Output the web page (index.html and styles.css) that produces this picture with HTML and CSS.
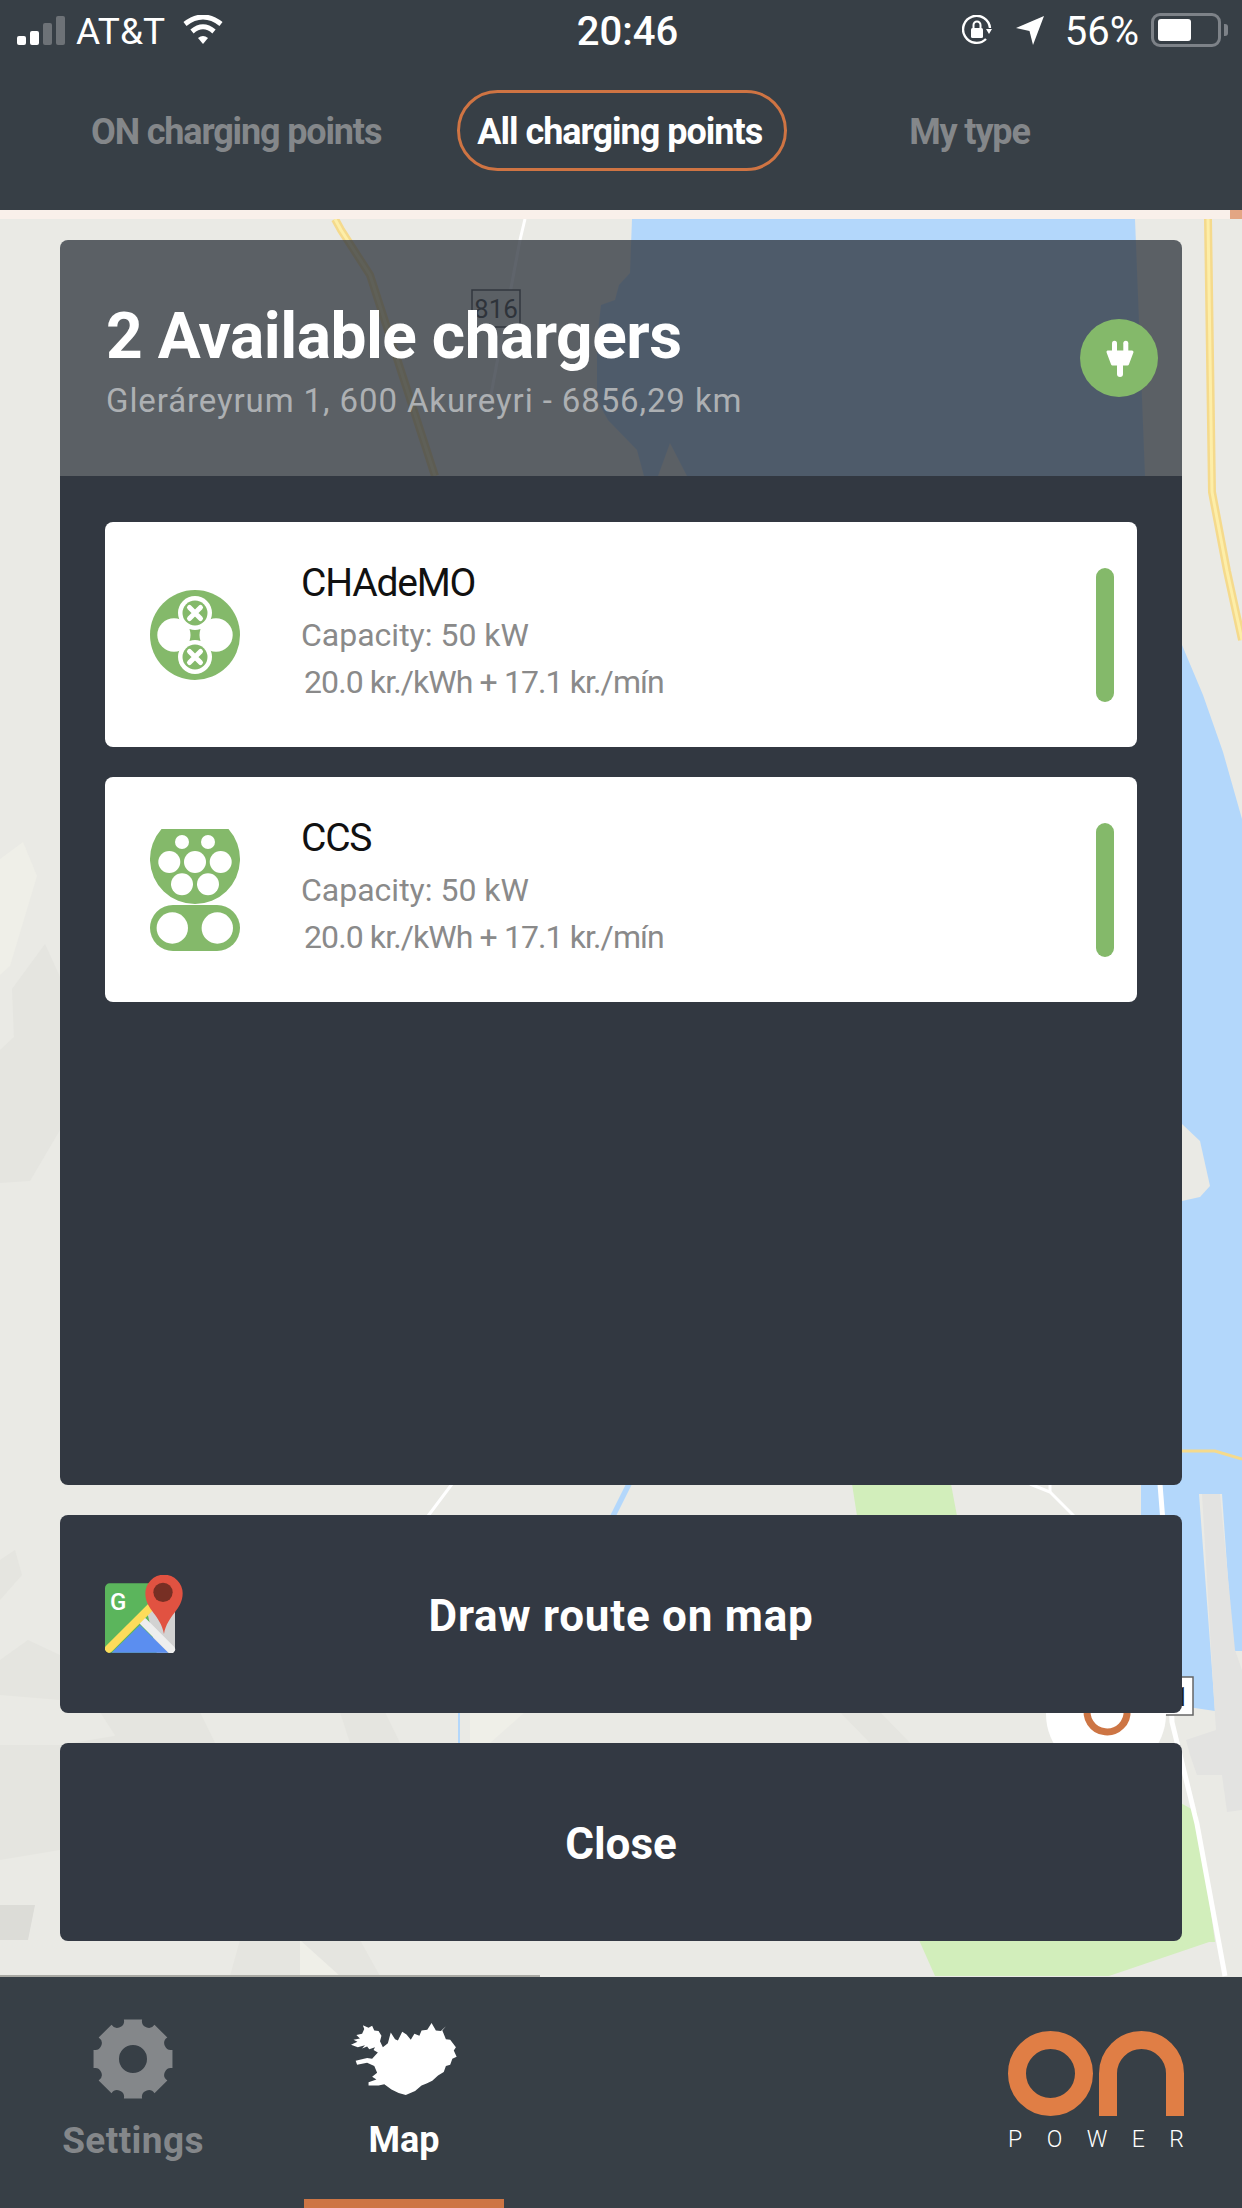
FILE: index.html
```html
<!DOCTYPE html>
<html lang="en">
<head>
    <meta charset="UTF-8">
    <meta name="viewport" content="width=device-width, initial-scale=1.0">
    <title>ON Power - Map</title>
    <link rel="stylesheet" href="styles.css">
</head>
<body>
    <header class="top-bar">
        <div class="status-bar">
            <div class="status-left">
                <div class="signal">
                    <span class="bar bar-1"></span>
                    <span class="bar bar-2"></span>
                    <span class="bar bar-3 off"></span>
                    <span class="bar bar-4 off"></span>
                </div>
                <span class="carrier">AT&amp;T</span>
                <svg class="wifi" viewBox="0 0 40 30" width="40" height="30">
                    <path d="M20 29 L15 23 Q20 19 25 23 Z" fill="#fff"/>
                    <path d="M9 16.5 Q20 7 31 16.5" fill="none" stroke="#fff" stroke-width="5"/>
                    <path d="M2 9 Q20 -5 38 9" fill="none" stroke="#fff" stroke-width="5"/>
                </svg>
            </div>
            <div class="status-time">20:46</div>
            <div class="status-right">
                <svg class="rotation-lock" viewBox="0 0 30 30" width="30" height="30">
                    <path d="M24 24 A13.5 13.5 0 1 1 28 13" fill="none" stroke="#fff" stroke-width="2.4"/>
                    <path d="M24 14 L30 14 L27 19 Z" fill="#fff"/>
                    <rect x="9" y="13" width="12" height="10" rx="1.5" fill="#fff"/>
                    <path d="M11.5 13 V10 A3.5 3.5 0 0 1 18.5 10 V13" fill="none" stroke="#fff" stroke-width="2"/>
                </svg>
                <svg class="location" viewBox="0 0 28 29" width="28" height="29">
                    <path d="M28 0 L17 29 L13.5 15 L0 12 Z" fill="#fff"/>
                </svg>
                <span class="battery-pct">56%</span>
                <div class="battery"><span class="battery-fill"></span></div>
                <span class="battery-nub"></span>
            </div>
        </div>
        <nav class="tabs">
            <a class="tab">ON charging points</a>
            <a class="tab tab-active">All charging points</a>
            <a class="tab tab-last">My type</a>
        </nav>
    </header>
    <div class="strip"><span class="strip-mark"></span></div>

    <main class="map-area">
        <svg class="map-bg" viewBox="0 219 1242 1758" width="1242" height="1758">
            <rect x="0" y="219" width="1242" height="1758" fill="#eaeae5"/>
            <!-- terrain -->
            <path d="M0 859 L23 842 L37 876 L10 966 L0 975Z" fill="#efefe8"/>
            <path d="M12 989 L45 944 L60 977 L60 1130 L30 1181 L0 1183 L0 1050 L14 1037 L37 1107 L14 1040Z" fill="#e5e5e0"/>
            <path d="M0 1560 L15 1550 L22 1575 L0 1600Z" fill="#e5e5e0"/>
            <path d="M0 1660 L28 1640 L60 1655 L60 1700 L0 1695Z" fill="#e5e5e0"/>
            <path d="M0 1745 L60 1745 L150 1730 L140 1790 L60 1850 L0 1860Z" fill="#e5e5e0"/>
            <path d="M0 1905 L35 1905 L28 1940 L0 1940Z" fill="#dcdcd7"/>
            <path d="M100 1712 L200 1712 L215 1743 L120 1743Z" fill="#e5e5e0"/>
            <path d="M340 1712 L350 1743 L400 1743 L385 1712Z" fill="#e5e5e0"/>
            <path d="M840 1712 L870 1743 L910 1743 L880 1712Z" fill="#e5e5e0"/>
            <path d="M240 1940 L360 1940 L380 1976 L230 1976Z" fill="#e5e5e0"/>
            <path d="M470 1712 L525 1712 L490 1743 L470 1743Z" fill="#efefe8"/>
            <path d="M300 1940 L340 1976 L300 1976Z" fill="#efefe8"/>
            <!-- water -->
            <path d="M632 219 H1135 L1145 476 L1141 700 L1141 1484 L1141 1700 L1215 1711 L1199 1494 L1222 1494 L1233 1651 H1242 V819 L1223 752 L1203 695 L1182 645 L1150 500 L655 500 L644 476 L637 450 L608 420 L597 400 L597 340 L601 305 L615 300 L619 285 L630 273Z" fill="#b3d7fb"/>
            <path d="M658 476 L670 443 L687 476Z" fill="#eaeae5"/>
            <path d="M1182 1124 L1200 1141 L1210 1186 L1200 1197 L1182 1201Z" fill="#eaeae5"/>
            <path d="M1202 1494 L1220 1494 L1235 1650 L1242 1670 V1810 L1227 1812 L1222 1775 L1197 1775 L1190 1755 L1186 1740 L1216 1730 L1214 1700Z" fill="#e3e3e1"/>
            <path d="M626 1484 L632 1484 L616 1516 L610 1516Z" fill="#b3d7fb"/>
            <rect x="458" y="1712" width="2" height="31" fill="#b3d7fb"/>
            <!-- parks -->
            <path d="M852 1484 H951 L957 1516 H857Z" fill="#d2eebb"/>
            <path d="M919 1940 H1215 L1109 1976 H935Z" fill="#d2eebb"/>
            <path d="M1175 1800 L1197 1812 L1215 1942 H1175Z" fill="#d2eebb"/>
            <!-- roads -->
            <polyline points="335,219 341,230 370,275 435,476" fill="none" stroke="#f5da8c" stroke-width="8"/>
            <polyline points="335,219 341,230 370,275 435,476" fill="none" stroke="#fdeea8" stroke-width="3"/>
            <polyline points="1208,219 1212,492 1227,571 1242,640" fill="none" stroke="#f5da8c" stroke-width="8"/>
            <polyline points="1208,219 1212,492 1227,571 1242,640" fill="none" stroke="#fdeea8" stroke-width="3"/>
            <polyline points="1182,1451 1215,1451 1242,1459" fill="none" stroke="#f5da8c" stroke-width="3"/>
            <polyline points="525,219 520,240 490,400" fill="none" stroke="#fff" stroke-width="3"/>
            <polyline points="452,1484 428,1516" fill="none" stroke="#fff" stroke-width="3"/>
            <polyline points="1030,1484 1050,1492 1074,1516" fill="none" stroke="#fff" stroke-width="3"/>
            <polyline points="1050,1484 1050,1492" fill="none" stroke="#fff" stroke-width="3"/>
            <polyline points="1160,1484 1166,1560 1172,1722 1197,1824 1225,1976" fill="none" stroke="#fff" stroke-width="5"/>
            <!-- badges and marker -->
            <rect x="472" y="290" width="48" height="37" fill="#eaeae5" stroke="#333" stroke-width="1.5"/>
            <text class="map-label" x="496" y="318" text-anchor="middle">816</text>
            <rect x="1150" y="1677" width="43" height="38" fill="#fff" stroke="#666" stroke-width="1.5"/>
            <text class="map-label" x="1189" y="1706" text-anchor="end">1</text>
            <circle cx="1106" cy="1714" r="60" fill="#fff"/>
            <path d="M1088 1706 A20 20 0 1 0 1127 1710" fill="none" stroke="#cd7544" stroke-width="7"/>
            <rect x="0" y="1975" width="540" height="2" fill="#a9a9a3"/>
        </svg>

        <section class="panel">
            <div class="panel-head">
                <div class="panel-head-text">
                    <h1>2 Available chargers</h1>
                    <p>Gleráreyrum 1, 600 Akureyri - 6856,29 km</p>
                </div>
                <div class="plug-badge">
                    <svg viewBox="0 0 78 78" width="78" height="78">
                        <rect x="32" y="21.7" width="5" height="14" rx="2.5" fill="#fff"/>
                        <rect x="43.3" y="21.7" width="5" height="14" rx="2.5" fill="#fff"/>
                        <path d="M28 33 H52 L47.5 45 H32.5 Z" fill="#fff" stroke="#fff" stroke-width="3" stroke-linejoin="round"/>
                        <rect x="37" y="44" width="6" height="14" rx="3" fill="#fff"/>
                    </svg>
                </div>
            </div>
            <div class="panel-body">
                <div class="charger-card">
                    <svg class="charger-icon" viewBox="0 0 90 90" width="90" height="90">
                        <circle cx="45" cy="45" r="45" fill="#84b96a"/>
                        <circle cx="24" cy="45" r="16.7" fill="#fff"/>
                        <circle cx="66" cy="45" r="16.7" fill="#fff"/>
                        <rect x="30" y="34" width="30" height="22" fill="#fff"/>
                        <circle cx="45" cy="23" r="17" fill="#fff"/>
                        <circle cx="45" cy="67" r="17" fill="#fff"/>
                        <circle cx="45" cy="23" r="12.5" fill="#84b96a"/>
                        <circle cx="45" cy="67" r="12.5" fill="#84b96a"/>
                        <path d="M39.5 17.5 L50.5 28.5 M50.5 17.5 L39.5 28.5 M39.5 61.5 L50.5 72.5 M50.5 61.5 L39.5 72.5" stroke="#fff" stroke-width="5" stroke-linecap="round"/>
                        <path d="M39.5 39 Q45 41 50.5 39 Q48.5 45 50.5 51 Q45 49 39.5 51 Q41.5 45 39.5 39Z" fill="#84b96a"/>
                    </svg>
                    <div class="charger-info">
                        <h2>CHAdeMO</h2>
                        <p>Capacity: 50 kW</p>
                        <p class="price">20.0 kr./kWh + 17.1 kr./mín</p>
                    </div>
                    <span class="charger-level"></span>
                </div>
                <div class="charger-card">
                    <svg class="charger-icon" viewBox="0 0 90 122" width="90" height="122">
                        <path d="M11.5 0 H78.5 A45 45 0 1 1 11.5 0Z" fill="#84b96a"/>
                        <rect x="0" y="76" width="90" height="46" rx="23" fill="#84b96a"/>
                        <g fill="#fff">
                            <circle cx="32" cy="13" r="7"/>
                            <circle cx="58" cy="13" r="7"/>
                            <circle cx="19.3" cy="33" r="11"/>
                            <circle cx="45" cy="33" r="11"/>
                            <circle cx="70.7" cy="33" r="11"/>
                            <circle cx="32" cy="55.3" r="11"/>
                            <circle cx="58" cy="55.3" r="11"/>
                            <circle cx="22.3" cy="99" r="15.7"/>
                            <circle cx="67.3" cy="99" r="15.7"/>
                        </g>
                    </svg>
                    <div class="charger-info">
                        <h2>CCS</h2>
                        <p>Capacity: 50 kW</p>
                        <p class="price">20.0 kr./kWh + 17.1 kr./mín</p>
                    </div>
                    <span class="charger-level"></span>
                </div>
            </div>
        </section>

        <button class="panel-btn btn-route">
            <svg class="maps-icon" viewBox="45 45 234 234" width="78" height="78">
                <rect x="45" y="70" width="210" height="208" rx="14" fill="#5bb55c"/>
                <path d="M170 150 H255 V264 Q255 278 241 278 H200Z" fill="#d2d2d2"/>
                <path d="M65 278 L150 195 L235 278Z" fill="#5b8ef0"/>
                <path d="M160 185 L243 268" stroke="#eeeeee" stroke-width="24" stroke-linecap="round"/>
                <path d="M57 266 L185 138" stroke="#fddc5a" stroke-width="24" stroke-linecap="round"/>
                <text class="maps-g" x="60" y="150">G</text>
                <path d="M166 100 A56 56 0 0 1 278 100 C278 150 232 165 222 222 C212 165 166 150 166 100Z" fill="#e15241"/>
                <circle cx="219" cy="97" r="29" fill="#772f24"/>
            </svg>
            <span class="route-label">Draw route on map</span>
        </button>
        <button class="panel-btn btn-close">Close</button>
    </main>

    <footer class="bottom-nav">
        <a class="nav-item nav-settings">
            <span class="nav-icon">
                <svg viewBox="-41 -41 82 82" width="82" height="82">
                    <path fill-rule="evenodd" fill="#84878a" d="M39.46 -9.11 L39.46 9.11 A6.8 6.8 0 0 0 34.35 21.46 L21.46 34.35 A6.8 6.8 0 0 0 9.11 39.46 L-9.11 39.46 A6.8 6.8 0 0 0 -21.46 34.35 L-34.35 21.46 A6.8 6.8 0 0 0 -39.46 9.11 L-39.46 -9.11 A6.8 6.8 0 0 0 -34.35 -21.46 L-21.46 -34.35 A6.8 6.8 0 0 0 -9.11 -39.46 L9.11 -39.46 A6.8 6.8 0 0 0 21.46 -34.35 L34.35 -21.46 A6.8 6.8 0 0 0 39.46 -9.11Z M14 0 A14 14 0 1 0 -14 0 A14 14 0 1 0 14 0Z"/>
                </svg>
            </span>
            <span class="nav-label">Settings</span>
        </a>
        <a class="nav-item nav-map">
            <span class="nav-icon">
                <svg viewBox="985 190 296 214" width="106" height="72" preserveAspectRatio="none">
                    <path fill="#fff" d="M985 255 L1003 246 L992 240 L1010 236 L1000 226 L1016 222 L1022 208 L1018 197 L1034 204 L1044 198 L1050 212 L1062 214 L1070 228 L1066 244 L1074 262 L1088 250 L1096 218 L1108 238 L1116 242 L1128 216 L1140 224 L1152 240 L1162 222 L1176 228 L1182 212 L1198 210 L1210 190 L1222 212 L1236 214 L1250 200 L1240 212 L1250 238 L1262 240 L1278 262 L1272 272 L1280 290 L1268 296 L1262 314 L1250 318 L1244 336 L1228 346 L1212 362 L1196 370 L1182 376 L1164 392 L1138 404 L1118 398 L1098 388 L1078 372 L1062 376 L1034 376 L1034 366 L1056 358 L1044 350 L1058 338 L1050 318 L1030 308 L1002 314 L998 302 L1030 294 L1044 296 L1060 278 L1048 270 L1052 262 L1036 268 L1030 260 L1016 266 L1024 256 L1004 262Z"/>
                </svg>
            </span>
            <span class="nav-label">Map</span>
        </a>
        <div class="brand">
            <svg viewBox="0 0 176 85" width="176" height="85">
                <circle cx="42.5" cy="42.5" r="33.5" fill="none" stroke="#e07e45" stroke-width="18"/>
                <path d="M100 85 V42.5 A33.5 33.5 0 0 1 167 42.5 V85" fill="none" stroke="#e07e45" stroke-width="18"/>
            </svg>
            <div class="brand-word">
                <span>P</span><span>O</span><span>W</span><span>E</span><span>R</span>
            </div>
        </div>
    </footer>
</body>
</html>
```

FILE: styles.css
```css
* {
    box-sizing: border-box;
}
html, body {
    margin: 0;
    padding: 0;
}
body {
    width: 1242px;
    height: 2208px;
    display: flex;
    flex-direction: column;
    overflow: hidden;
    font-family: Roboto, 'Liberation Sans', sans-serif;
    background-color: #373f46;
    color: #fff;
}

/* top bar */
.top-bar {
    height: 210px;
    background-color: #373f46;
    flex-shrink: 0;
}
.status-bar {
    height: 90px;
    padding: 13px 14px 0 17px;
    display: grid;
    grid-template-columns: 1fr auto 1fr;
    align-items: start;
    font-size: 40px;
}
.status-left, .status-right {
    display: flex;
    align-items: center;
    height: 34px;
}
.status-right {
    justify-content: flex-end;
}
.signal {
    display: flex;
    align-items: flex-end;
    gap: 4px;
    height: 30px;
    margin-right: 11px;
}
.bar {
    width: 9px;
    background-color: #fff;
    border-radius: 2px;
}
.bar.off {
    background-color: #6d7277;
}
.bar-1 { height: 9px; }
.bar-2 { height: 14px; }
.bar-3 { height: 22px; }
.bar-4 { height: 29px; }
.carrier, .battery-pct {
    padding-top: 3px;
}
.carrier {
    font-size: 37px;
}
.wifi {
    margin-left: 18px;
}
.status-time {
    font-weight: 500;
    padding-left: 10px;
    line-height: 38px;
}
.rotation-lock {
    margin-right: 24px;
}
.location {
    margin-right: 21px;
}
.battery-pct {
    margin-right: 12px;
}
.battery {
    width: 70px;
    height: 34px;
    border: 3px solid #7d8288;
    border-radius: 9px;
    padding: 3px 4px;
}
.battery-fill {
    display: block;
    width: 33px;
    height: 100%;
    background-color: #fff;
    border-radius: 3px;
}
.battery-nub {
    width: 4px;
    height: 12px;
    margin-left: 3px;
    background-color: #7d8288;
    border-radius: 0 3px 3px 0;
}

.tabs {
    display: flex;
    align-items: center;
    padding-left: 71px;
    font-size: 36px;
    font-weight: 700;
}
.tab {
    height: 81px;
    line-height: 85px;
    padding: 0 20px;
    color: #84878a;
    white-space: nowrap;
    letter-spacing: -1.15px;
}
.tab-active {
    margin-left: 56px;
    color: #fff;
    border: 3px solid #cf7443;
    border-radius: 41px;
    line-height: 79px;
    padding: 0 22px 0 17px;
    letter-spacing: -1px;
}
.tab-last {
    margin-left: 102px;
}

.strip {
    height: 9px;
    background-color: #f9f0ea;
    flex-shrink: 0;
    display: flex;
    justify-content: flex-end;
}
.strip-mark {
    width: 12px;
    background-color: #e3a684;
}

/* map and panel */
.map-area {
    position: relative;
    height: 1758px;
    flex-shrink: 0;
    padding: 21px 60px 0;
    display: flex;
    flex-direction: column;
}
.map-bg {
    position: absolute;
    top: 0;
    left: 0;
}
.map-label {
    font-family: Roboto, sans-serif;
    font-size: 26px;
    fill: #222;
}
.panel {
    position: relative;
    height: 1245px;
    border-radius: 8px;
    overflow: hidden;
}
.panel-head {
    height: 236px;
    background-color: rgba(50, 56, 65, 0.78);
    display: flex;
    align-items: center;
    justify-content: space-between;
    padding: 0 24px 0 46px;
}
.panel-head-text {
    padding-top: 7px;
}
.panel-body {
    height: 1009px;
    background-color: #323841;
    padding: 46px 45px 0;
    display: flex;
    flex-direction: column;
    gap: 30px;
}
.panel-head h1 {
    margin: 0;
    font-size: 64px;
    font-weight: 700;
    line-height: 72px;
    letter-spacing: -0.5px;
}
.panel-head p {
    margin: 6px 0 0;
    font-size: 33px;
    line-height: 44px;
    letter-spacing: 0.9px;
    color: #adb0b3;
}
.plug-badge {
    width: 78px;
    height: 78px;
    border-radius: 50%;
    background-color: #84b96a;
}
.plug-badge svg {
    display: block;
}

.charger-card {
    height: 225px;
    background-color: #fff;
    border-radius: 8px;
    display: flex;
    align-items: center;
    padding: 0 23px 0 45px;
}
.charger-icon {
    flex-shrink: 0;
}
.charger-info {
    flex: 1;
    margin-left: 61px;
    padding-bottom: 5px;
}
.charger-info h2 {
    margin: 0 0 5px;
    font-size: 39px;
    font-weight: 400;
    line-height: 48px;
    letter-spacing: -1.2px;
    color: #111;
}
.charger-info p {
    margin: 0;
    font-size: 32px;
    line-height: 47px;
    color: #8a8a8a;
}
.charger-info .price {
    margin-left: 3px;
    letter-spacing: -0.9px;
}
.charger-level {
    width: 18px;
    height: 134px;
    border-radius: 9px;
    background-color: #84b96a;
}

.panel-btn {
    position: relative;
    height: 198px;
    margin-top: 30px;
    border: 0;
    border-radius: 8px;
    background-color: #333943;
    color: #fff;
    font-family: inherit;
    font-size: 44px;
    font-weight: 700;
    text-align: center;
    padding: 3px 0 0;
}
.route-label {
    letter-spacing: 0.75px;
}
.maps-icon {
    position: absolute;
    left: 45px;
    top: 60px;
}
.maps-g {
    font-family: Roboto, sans-serif;
    font-size: 72px;
    font-weight: 500;
    fill: #fff;
}

/* bottom nav */
.bottom-nav {
    flex: 1;
    display: flex;
    background-color: #373f46;
}
.nav-item {
    width: 200px;
    display: flex;
    flex-direction: column;
    align-items: center;
    padding-top: 41px;
    font-size: 37px;
    font-weight: 700;
}
.nav-settings {
    margin-left: 33px;
    color: #84878a;
    letter-spacing: 0.4px;
}
.nav-map {
    margin-left: 71px;
    color: #fff;
    border-bottom: 9px solid #cd7544;
}
.nav-icon {
    height: 82px;
    display: flex;
    align-items: center;
}
.nav-label {
    margin-top: 19px;
}
.nav-map .nav-label {
    font-size: 36px;
}
.brand {
    margin-left: auto;
    padding: 54px 58px 0 0;
}
.brand svg {
    display: block;
}
.brand-word {
    display: flex;
    justify-content: space-between;
    margin-top: 12px;
    font-size: 23px;
    font-weight: 300;
    line-height: 24px;
}
```
